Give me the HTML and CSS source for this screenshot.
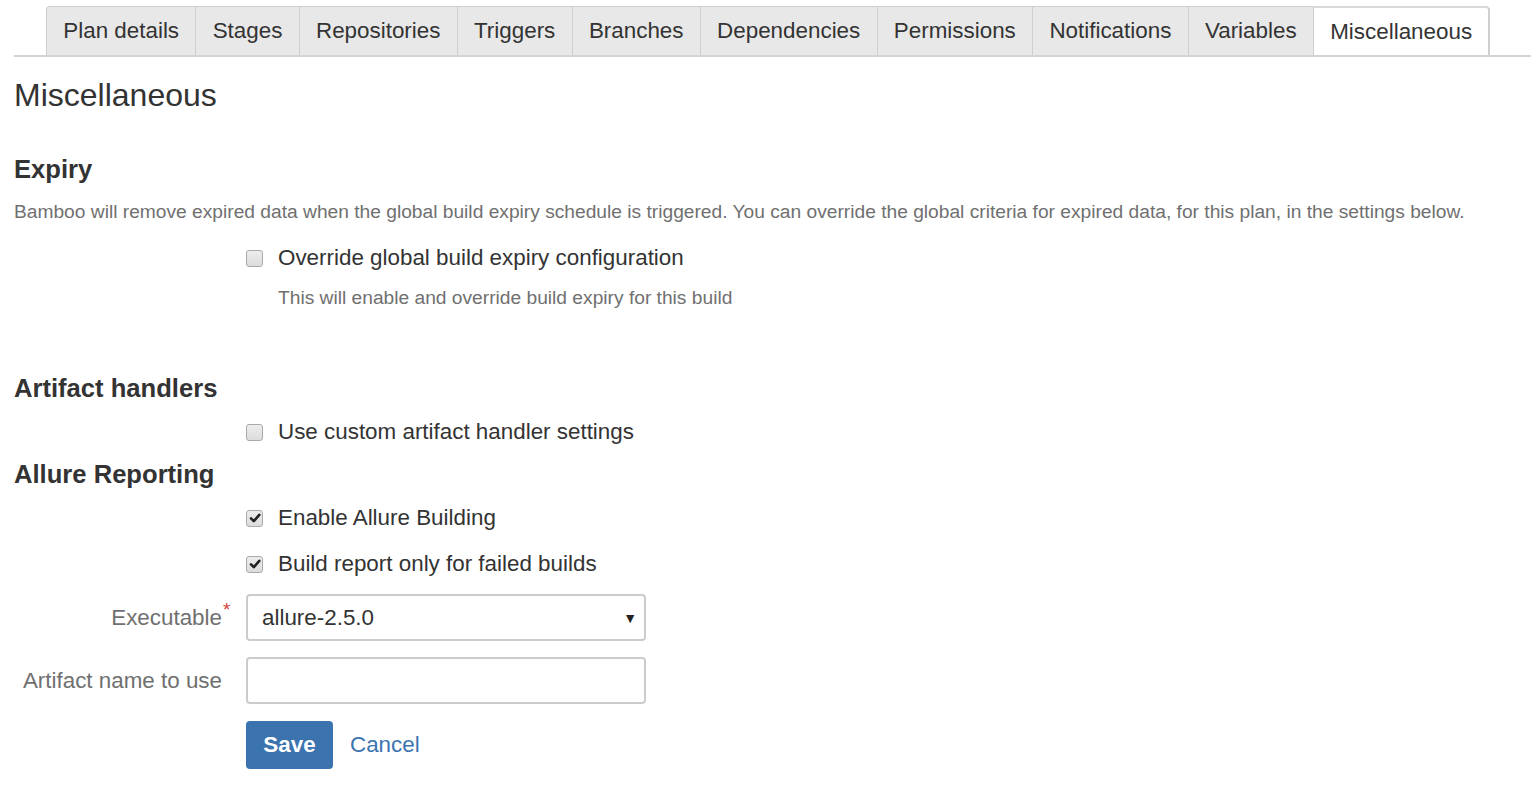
FILE: index.html
```html
<!DOCTYPE html>
<html>
<head>
<meta charset="utf-8">
<link rel="stylesheet" href="styles.css">
</head>
<body>
<div class="page">
  <nav class="tabs">
    <a class="tab">Plan details</a>
    <a class="tab">Stages</a>
    <a class="tab">Repositories</a>
    <a class="tab">Triggers</a>
    <a class="tab">Branches</a>
    <a class="tab">Dependencies</a>
    <a class="tab">Permissions</a>
    <a class="tab">Notifications</a>
    <a class="tab">Variables</a>
    <a class="tab active">Miscellaneous</a>
  </nav>

  <h1 class="title">Miscellaneous</h1>

  <h2 class="section">Expiry</h2>
  <p class="desc">Bamboo will remove expired data when the global build expiry schedule is triggered. You can override the global criteria for expired data, for this plan, in the settings below.</p>

  <div class="row check-row first">
    <div class="lbl"></div>
    <label class="check"><span class="box"></span>Override global build expiry configuration</label>
  </div>
  <div class="row">
    <div class="lbl"></div>
    <div class="hint">This will enable and override build expiry for this build</div>
  </div>

  <h2 class="section artifact">Artifact handlers</h2>
  <div class="row check-row custom">
    <div class="lbl"></div>
    <label class="check"><span class="box"></span>Use custom artifact handler settings</label>
  </div>

  <h2 class="section allure">Allure Reporting</h2>
  <div class="row check-row enable">
    <div class="lbl"></div>
    <label class="check"><span class="box checked"><svg viewBox="0 0 12 12" width="12" height="12"><path d="M2 6.4 L4.8 9.2 L10.3 2.8" fill="none" stroke="#222" stroke-width="2.6" stroke-linecap="round" stroke-linejoin="round"/></svg></span>Enable Allure Building</label>
  </div>
  <div class="row check-row report">
    <div class="lbl"></div>
    <label class="check"><span class="box checked"><svg viewBox="0 0 12 12" width="12" height="12"><path d="M2 6.4 L4.8 9.2 L10.3 2.8" fill="none" stroke="#222" stroke-width="2.6" stroke-linecap="round" stroke-linejoin="round"/></svg></span>Build report only for failed builds</label>
  </div>

  <div class="row field exec">
    <div class="lbl"><span class="lbl-text">Executable<span class="req">*</span></span></div>
    <div class="select"><span>allure-2.5.0</span><span class="caret">▼</span></div>
  </div>
  <div class="row field">
    <div class="lbl">Artifact name to use</div>
    <div class="input"></div>
  </div>
  <div class="row buttons">
    <div class="lbl"></div>
    <div class="actions"><button class="save">Save</button><a class="cancel">Cancel</a></div>
  </div>
</div>
</body>
</html>
```

FILE: styles.css
```css
* { box-sizing: border-box; }
html, body { margin: 0; padding: 0; background: #fff; }
body {
  font-family: "Liberation Sans", Arial, Helvetica, sans-serif;
  color: #333;
}
.page { padding: 6px 0 0 14px; }

.tabs {
  display: flex;
  padding-left: 32px;
  border-bottom: 2px solid #d4d4d4;
}
.tab {
  display: block;
  height: 49px;
  padding: 0 16.3px;
  line-height: 48px;
  font-size: 22.4px;
  color: #333;
  background: #e8e8e8;
  border: 1px solid #cfcfcf;
  border-left: none;
  border-bottom: none;
}
.tab:first-child { border-left: 1px solid #cfcfcf; border-top-left-radius: 4px; }
.tab.active {
  background: #fff;
  border-right: 2px solid #cfcfcf;
  border-top: 2px solid #d8d8d8;
  line-height: 47px;
  border-top-right-radius: 4px;
}

.title {
  margin: 18px 0 0;
  font-size: 32px;
  font-weight: normal;
  line-height: 40px;
}
.section {
  margin: 38px 0 0;
  font-size: 25.6px;
  font-weight: bold;
  line-height: 32px;
}
.desc {
  margin: 13px 0 0;
  font-size: 19.2px;
  line-height: 27px;
  color: #707070;
}
.row {
  display: grid;
  grid-template-columns: 208px 400px;
  column-gap: 24px;
  align-items: center;
}
.check-row.first { margin-top: 18px; }
.check {
  display: flex;
  align-items: center;
  font-size: 22.4px;
  line-height: 30px;
  color: #333;
  white-space: nowrap;
}
.box {
  width: 17px;
  height: 17px;
  margin: 0 15px 0 0;
  border: 1px solid #a9a9a9;
  border-radius: 3px;
  background: linear-gradient(#ededed, #dcdcdc);
  display: flex;
  align-items: center;
  justify-content: center;
  flex: none;
}
.hint {
  margin-top: 11px;
  padding-left: 32px;
  font-size: 19.2px;
  line-height: 27px;
  color: #707070;
  white-space: nowrap;
}
.section.artifact { margin-top: 61px; }
.check-row.custom { margin-top: 13px; }
.section.allure { margin-top: 11px; }
.check-row.enable { margin-top: 13px; }
.check-row.report { margin-top: 16px; }

.field .lbl {
  text-align: right;
  font-size: 22.4px;
  color: #707070;
}
.lbl-text { position: relative; }
.req {
  position: absolute;
  left: 100%;
  top: -6px;
  margin-left: 1px;
  color: #d04437;
  font-size: 19px;
}
.exec { margin-top: 15px; }
.field + .field { margin-top: 16px; }
.select, .input {
  height: 47px;
  border: 2px solid #ccc;
  border-radius: 4px;
  background: #fff;
}
.select {
  display: flex;
  align-items: center;
  justify-content: space-between;
  padding: 0 7px 0 14px;
  font-size: 22.4px;
  color: #333;
}
.caret { font-size: 14px; color: #222; }

.buttons { margin-top: 17px; }
.actions { display: flex; align-items: center; }
.save {
  height: 48px;
  width: 87px;
  border: none;
  border-radius: 4px;
  background: #3b73af;
  color: #fff;
  font-family: "Liberation Sans", Arial, sans-serif;
  font-size: 22.4px;
  font-weight: bold;
}
.cancel {
  margin-left: 17px;
  font-size: 22.4px;
  color: #3b73af;
}
```
